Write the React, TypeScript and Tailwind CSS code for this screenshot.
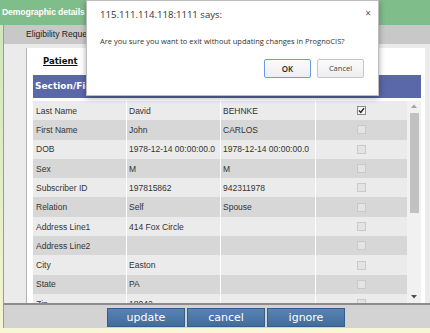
type Row = [string, string, string, boolean?];

const rows: Row[] = [
  ['Last Name', 'David', 'BEHNKE', true],
  ['First Name', 'John', 'CARLOS'],
  ['DOB', '1978-12-14 00:00:00.0', '1978-12-14 00:00:00.0'],
  ['Sex', 'M', 'M'],
  ['Subscriber ID', '197815862', '942311978'],
  ['Relation', 'Self', 'Spouse'],
  ['Address Line1', '414 Fox Circle', ''],
  ['Address Line2', '', ''],
  ['City', 'Easton', ''],
  ['State', 'PA', ''],
  ['Zip', '18042', ''],
];

function Checkbox({ checked }: { checked?: boolean }) {
  if (checked) {
    return (
      <span className="w-[9px] h-[9px] border border-[#8a8a8a] bg-[#f4f4f4] flex items-center justify-center">
        <svg width="7" height="7" viewBox="0 0 7 7">
          <path d="M1 3.6 L2.8 5.4 L6 1.2" stroke="#222" strokeWidth="1.4" fill="none" />
        </svg>
      </span>
    );
  }
  return <span className="w-[9px] h-[9px] border border-[#c9c9c9] bg-[#e4e4e4]" />;
}

function BottomButton({ label }: { label: string }) {
  return (
    <button className="w-[78px] h-[19px] bg-gradient-to-b from-[#5784b4] to-[#416d9d] border border-[#335d8b] text-white text-[11px] leading-none font-['DejaVu_Sans',sans-serif] flex items-center justify-center">
      {label}
    </button>
  );
}

function Dialog() {
  return (
    <div className="absolute left-[86px] top-0 w-[293px] h-[96px] bg-white border border-[#bdbdbd] shadow-[0_2px_6px_rgba(0,0,0,0.35)] font-['Open_Sans',sans-serif] text-[#333]">
      <div className="flex items-start justify-between pl-[13px] pr-[7px] pt-[7px]">
        <span className="text-[9.6px] leading-[14px]">115.111.114.118:1111 says:</span>
        <span className="text-[10px] leading-[10px] text-[#555]">×</span>
      </div>
      <div className="pl-[13px] pt-[14px] text-[7.5px] leading-[10px]">
        Are you sure you want to exit without updating changes in PrognoCIS?
      </div>
      <div className="flex justify-end gap-[6px] pr-[14px] pt-[13px]">
        <button className="w-[47px] h-[19px] rounded-[2px] border border-[#6a9be6] bg-gradient-to-b from-[#fbfbfb] to-[#eeeeee] text-[8px] font-semibold text-[#222] leading-none">
          OK
        </button>
        <button className="w-[47px] h-[19px] rounded-[2px] border border-[#c6c6c6] bg-gradient-to-b from-[#fbfbfb] to-[#eeeeee] text-[7.5px] text-[#444] leading-none">
          Cancel
        </button>
      </div>
    </div>
  );
}

export default function App() {
  return (
    <div className="relative w-[430px] h-[333px] overflow-hidden flex flex-col bg-[#f6f6d6] font-['Liberation_Sans',Arial,sans-serif]">
      {/* title bar */}
      <div className="h-[25px] shrink-0 bg-[#7fbd8a] flex items-center px-[2px]">
        <span className="text-white font-bold text-[8.6px] tracking-[-0.1px]">Demographic details</span>
      </div>

      <div className="flex flex-1 min-h-0">
        <div className="w-[3px] bg-gradient-to-b from-[#cfe6bf] to-[#f4f4d2]" />
        <div className="flex-1 flex flex-col border-l border-[#9a9a9a]">
          {/* tab strip */}
          <div className="h-[19px] shrink-0 bg-[#c8c8c8] flex items-center pl-[22px]">
            <span className="text-[8.6px] text-[#222]">Eligibility Request</span>
          </div>

          {/* content */}
          <div className="flex-1 min-h-0 bg-[#ebebeb] pl-[22px] pr-[5px] pt-[4px] flex">
            <div className="flex-1 bg-white border-l border-[#b4b4b4] flex flex-col overflow-hidden">
              <div className="h-[27px] shrink-0 flex items-center pl-[16px]">
                <span className="font-['DejaVu_Sans',sans-serif] font-bold text-[8.5px] underline text-[#111]">Patient</span>
              </div>
              <div className="pl-[6px] pr-[4px] flex-1 min-h-0 flex flex-col">
                <div className="h-[23px] shrink-0 bg-[#5a67a9] grid grid-cols-[94px_94px_95px_1fr] items-center text-white font-bold text-[9px] font-['DejaVu_Sans',sans-serif]">
                  <span className="pl-[2px] whitespace-nowrap">Section/Field</span>
                  <span className="pl-[3px]">Patient</span>
                  <span className="pl-[3px]">Subscriber</span>
                  <span />
                </div>
                <div className="flex-1 min-h-0 flex pt-[3px] overflow-hidden">
                  <div className="w-[374px] flex flex-col">
                    {rows.map(([label, a, b, checked], i) => {
                      const bg = i % 2 === 0 ? 'bg-[#ebebeb]' : 'bg-[#d7d7d7]';
                      return (
                        <div
                          key={label}
                          className="h-[19.3px] shrink-0 grid grid-cols-[93px_93px_94px_91px] gap-x-px bg-white text-[8.5px] text-[#333]"
                        >
                          <div className={`${bg} pl-[3px] pt-[1px] flex items-center whitespace-nowrap`}>{label}</div>
                          <div className={`${bg} pl-[2px] pt-[1px] flex items-center whitespace-nowrap`}>{a}</div>
                          <div className={`${bg} pl-[2px] pt-[1px] flex items-center whitespace-nowrap`}>{b}</div>
                          <div className={`${bg} flex items-center justify-center`}>
                            <Checkbox checked={checked} />
                          </div>
                        </div>
                      );
                    })}
                  </div>
                  {/* scrollbar */}
                  <div className="w-[14px] bg-[#f1f1f1] flex flex-col items-center pt-[2px]">
                    <svg width="6" height="4" viewBox="0 0 6 4" className="mt-[1px]">
                      <path d="M0 4 L3 0.5 L6 4 Z" fill="#a3a3a3" />
                    </svg>
                    <div className="mt-[5px] w-[9px] h-[100px] bg-[#c1c1c1]" />
                    <div className="flex-1" />
                    <svg width="6" height="4" viewBox="0 0 6 4" className="mb-[4px]">
                      <path d="M0 0 L6 0 L3 3.5 Z" fill="#505050" />
                    </svg>
                  </div>
                </div>
              </div>
            </div>
          </div>

          {/* button band */}
          <div className="h-[25px] shrink-0 border-t-2 border-[#8c8c8c] bg-[#d3d3d3] flex items-start pt-[3px] pl-[103px] gap-[2px]">
            <BottomButton label="update" />
            <BottomButton label="cancel" />
            <BottomButton label="ignore" />
          </div>
        </div>
      </div>
      <div className="h-[5px] shrink-0 bg-[#f7f7d8]" />

      <Dialog />
    </div>
  );
}
